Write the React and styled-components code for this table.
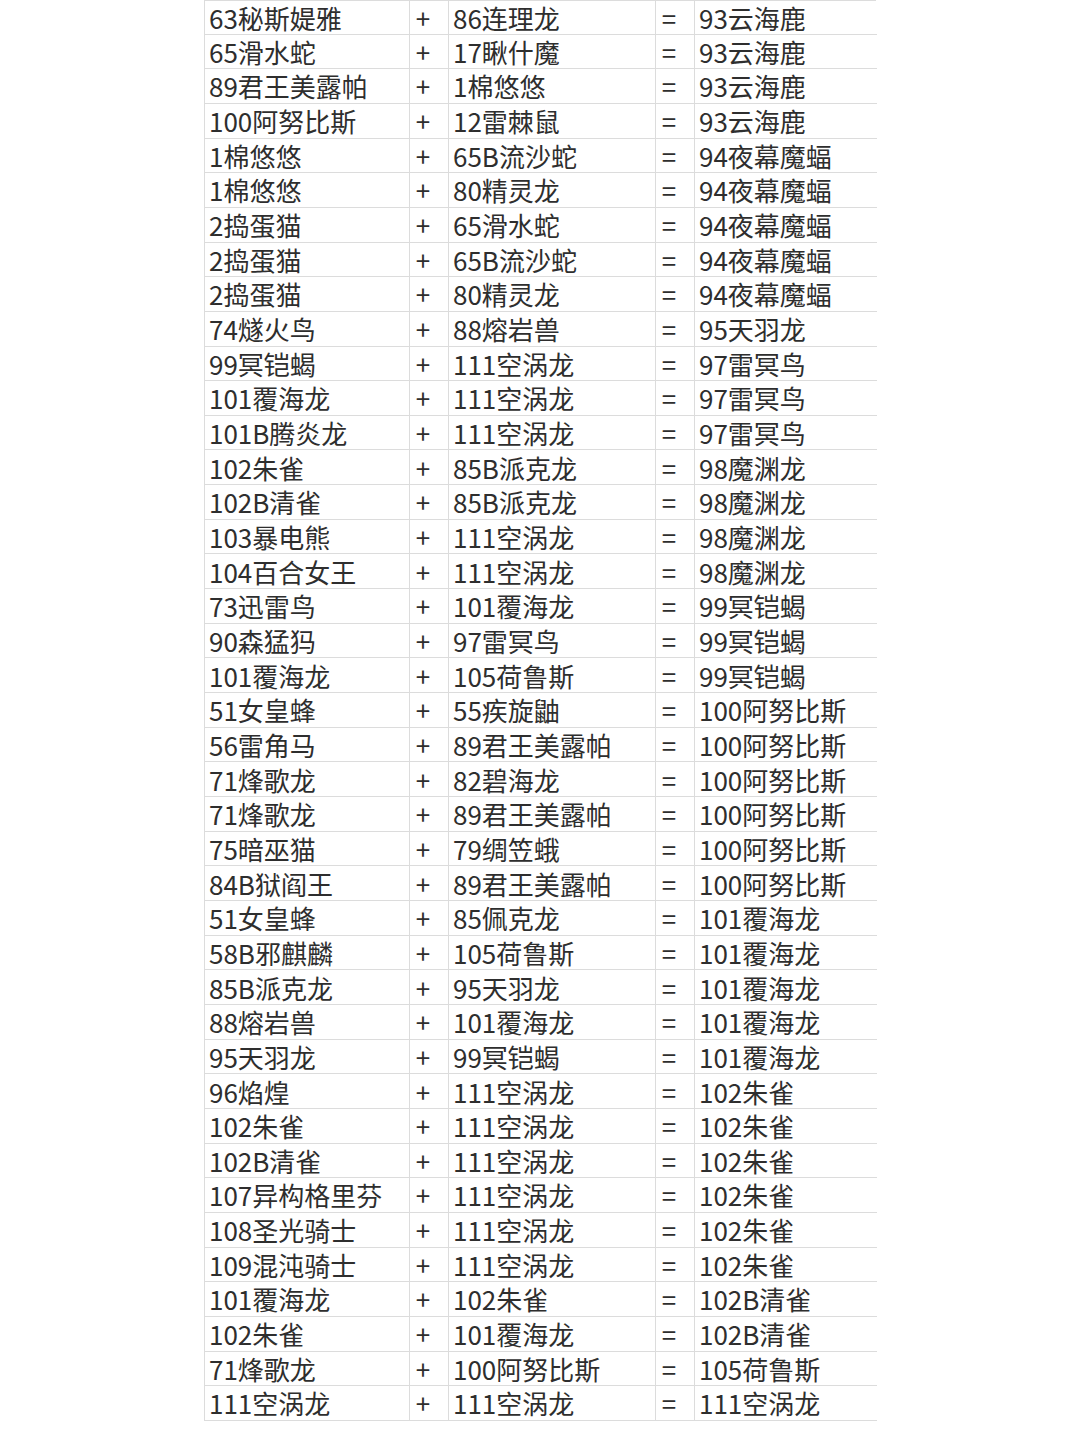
import React from "react";
import styled, { createGlobalStyle } from "styled-components";

const GlobalStyle = createGlobalStyle`
  html, body {
    margin: 0;
    padding: 0;
    background: #ffffff;
  }
`;

const rows = [
  ["63秘斯媞雅", "86连理龙", "93云海鹿"],
  ["65滑水蛇", "17瞅什魔", "93云海鹿"],
  ["89君王美露帕", "1棉悠悠", "93云海鹿"],
  ["100阿努比斯", "12雷棘鼠", "93云海鹿"],
  ["1棉悠悠", "65B流沙蛇", "94夜幕魔蝠"],
  ["1棉悠悠", "80精灵龙", "94夜幕魔蝠"],
  ["2捣蛋猫", "65滑水蛇", "94夜幕魔蝠"],
  ["2捣蛋猫", "65B流沙蛇", "94夜幕魔蝠"],
  ["2捣蛋猫", "80精灵龙", "94夜幕魔蝠"],
  ["74燧火鸟", "88熔岩兽", "95天羽龙"],
  ["99冥铠蝎", "111空涡龙", "97雷冥鸟"],
  ["101覆海龙", "111空涡龙", "97雷冥鸟"],
  ["101B腾炎龙", "111空涡龙", "97雷冥鸟"],
  ["102朱雀", "85B派克龙", "98魔渊龙"],
  ["102B清雀", "85B派克龙", "98魔渊龙"],
  ["103暴电熊", "111空涡龙", "98魔渊龙"],
  ["104百合女王", "111空涡龙", "98魔渊龙"],
  ["73迅雷鸟", "101覆海龙", "99冥铠蝎"],
  ["90森猛犸", "97雷冥鸟", "99冥铠蝎"],
  ["101覆海龙", "105荷鲁斯", "99冥铠蝎"],
  ["51女皇蜂", "55疾旋鼬", "100阿努比斯"],
  ["56雷角马", "89君王美露帕", "100阿努比斯"],
  ["71烽歌龙", "82碧海龙", "100阿努比斯"],
  ["71烽歌龙", "89君王美露帕", "100阿努比斯"],
  ["75暗巫猫", "79绸笠蛾", "100阿努比斯"],
  ["84B狱阎王", "89君王美露帕", "100阿努比斯"],
  ["51女皇蜂", "85佩克龙", "101覆海龙"],
  ["58B邪麒麟", "105荷鲁斯", "101覆海龙"],
  ["85B派克龙", "95天羽龙", "101覆海龙"],
  ["88熔岩兽", "101覆海龙", "101覆海龙"],
  ["95天羽龙", "99冥铠蝎", "101覆海龙"],
  ["96焰煌", "111空涡龙", "102朱雀"],
  ["102朱雀", "111空涡龙", "102朱雀"],
  ["102B清雀", "111空涡龙", "102朱雀"],
  ["107异构格里芬", "111空涡龙", "102朱雀"],
  ["108圣光骑士", "111空涡龙", "102朱雀"],
  ["109混沌骑士", "111空涡龙", "102朱雀"],
  ["101覆海龙", "102朱雀", "102B清雀"],
  ["102朱雀", "101覆海龙", "102B清雀"],
  ["71烽歌龙", "100阿努比斯", "105荷鲁斯"],
  ["111空涡龙", "111空涡龙", "111空涡龙"],
];

const Sheet = styled.div`
  display: grid;
  grid-template-columns: 205px 39px 207px 39px 182px;
  grid-template-rows: 33.6px;
  grid-auto-rows: 34.66px;
  width: 672px;
  margin-left: 204px;
  border-top: 1px solid #dcdcdc;
  border-left: 1px solid #dcdcdc;
  box-sizing: border-box;
  font-family: "Noto Sans CJK SC", "Noto Sans", sans-serif;
  font-size: 26px;
  color: #2e2e2e;
`;

const Cell = styled.div`
  display: flex;
  align-items: center;
  justify-content: ${(p) => (p.$sign ? "center" : "flex-start")};
  padding: ${(p) => (p.$sign ? "0 12px 0 0" : "0 0 0 4px")};
  border-bottom: 1px solid #dcdcdc;
  border-right: ${(p) => (p.$last ? "none" : "1px solid #dcdcdc")};
  box-sizing: border-box;
  line-height: 1.2;
  white-space: nowrap;
`;

export default function App() {
  return (
    <>
      <GlobalStyle />
      <Sheet>
        {rows.map(([a, b, c], i) => (
          <React.Fragment key={i}>
            <Cell>{a}</Cell>
            <Cell $sign>+</Cell>
            <Cell>{b}</Cell>
            <Cell $sign>=</Cell>
            <Cell $last>{c}</Cell>
          </React.Fragment>
        ))}
      </Sheet>
    </>
  );
}
